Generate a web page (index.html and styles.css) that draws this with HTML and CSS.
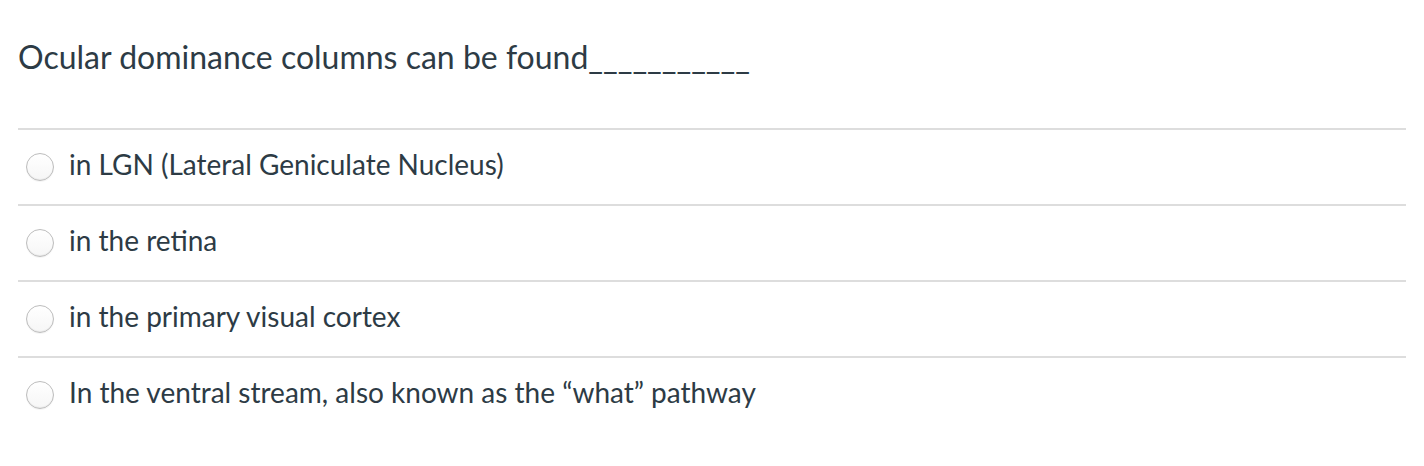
FILE: index.html
```html
<!DOCTYPE html>
<html>
<head>
<meta charset="utf-8">
<link rel="stylesheet" href="styles.css">
</head>
<body>
<div class="quiz">
  <div class="question">Ocular dominance columns can be found___________</div>
  <div class="answers">
    <label class="answer"><span class="radio"></span><span class="text">in LGN (Lateral Geniculate Nucleus)</span></label>
    <label class="answer"><span class="radio"></span><span class="text">in the retina</span></label>
    <label class="answer"><span class="radio"></span><span class="text">in the primary visual cortex</span></label>
    <label class="answer"><span class="radio"></span><span class="text">In the ventral stream, also known as the “what” pathway</span></label>
  </div>
</div>
</body>
</html>
```
FILE: styles.css
```css
html, body {
  margin: 0;
  padding: 0;
  background: #ffffff;
}
body {
  font-family: Lato, "Liberation Sans", sans-serif;
  color: #2d3b45;
}
.quiz {
  padding: 0 18px;
}
.question {
  font-size: 32px;
  line-height: 40px;
  padding-top: 37px;
  box-sizing: border-box;
  height: 128px;
}
.answers {
  display: flex;
  flex-direction: column;
}
.answer {
  display: flex;
  align-items: center;
  border-top: 2px solid #dddddd;
  height: 74px;
  box-sizing: content-box;
  padding-left: 8px;
  padding-bottom: 4px;
  margin-bottom: -4px;
  gap: 15px;
}
.answer + .answer {
  margin-top: 0;
}
.radio {
  width: 28px;
  height: 28px;
  border-radius: 50%;
  border: 1px solid #bdbdbd;
  background: linear-gradient(#ffffff, #f6f6f6);
  box-shadow: inset 0 -1px 1px rgba(0,0,0,0.06), 0 1px 0 rgba(0,0,0,0.04);
  box-sizing: border-box;
  flex: none;
}
.text {
  font-size: 28px;
  line-height: 34px;
  margin-bottom: 6px;
}
```
